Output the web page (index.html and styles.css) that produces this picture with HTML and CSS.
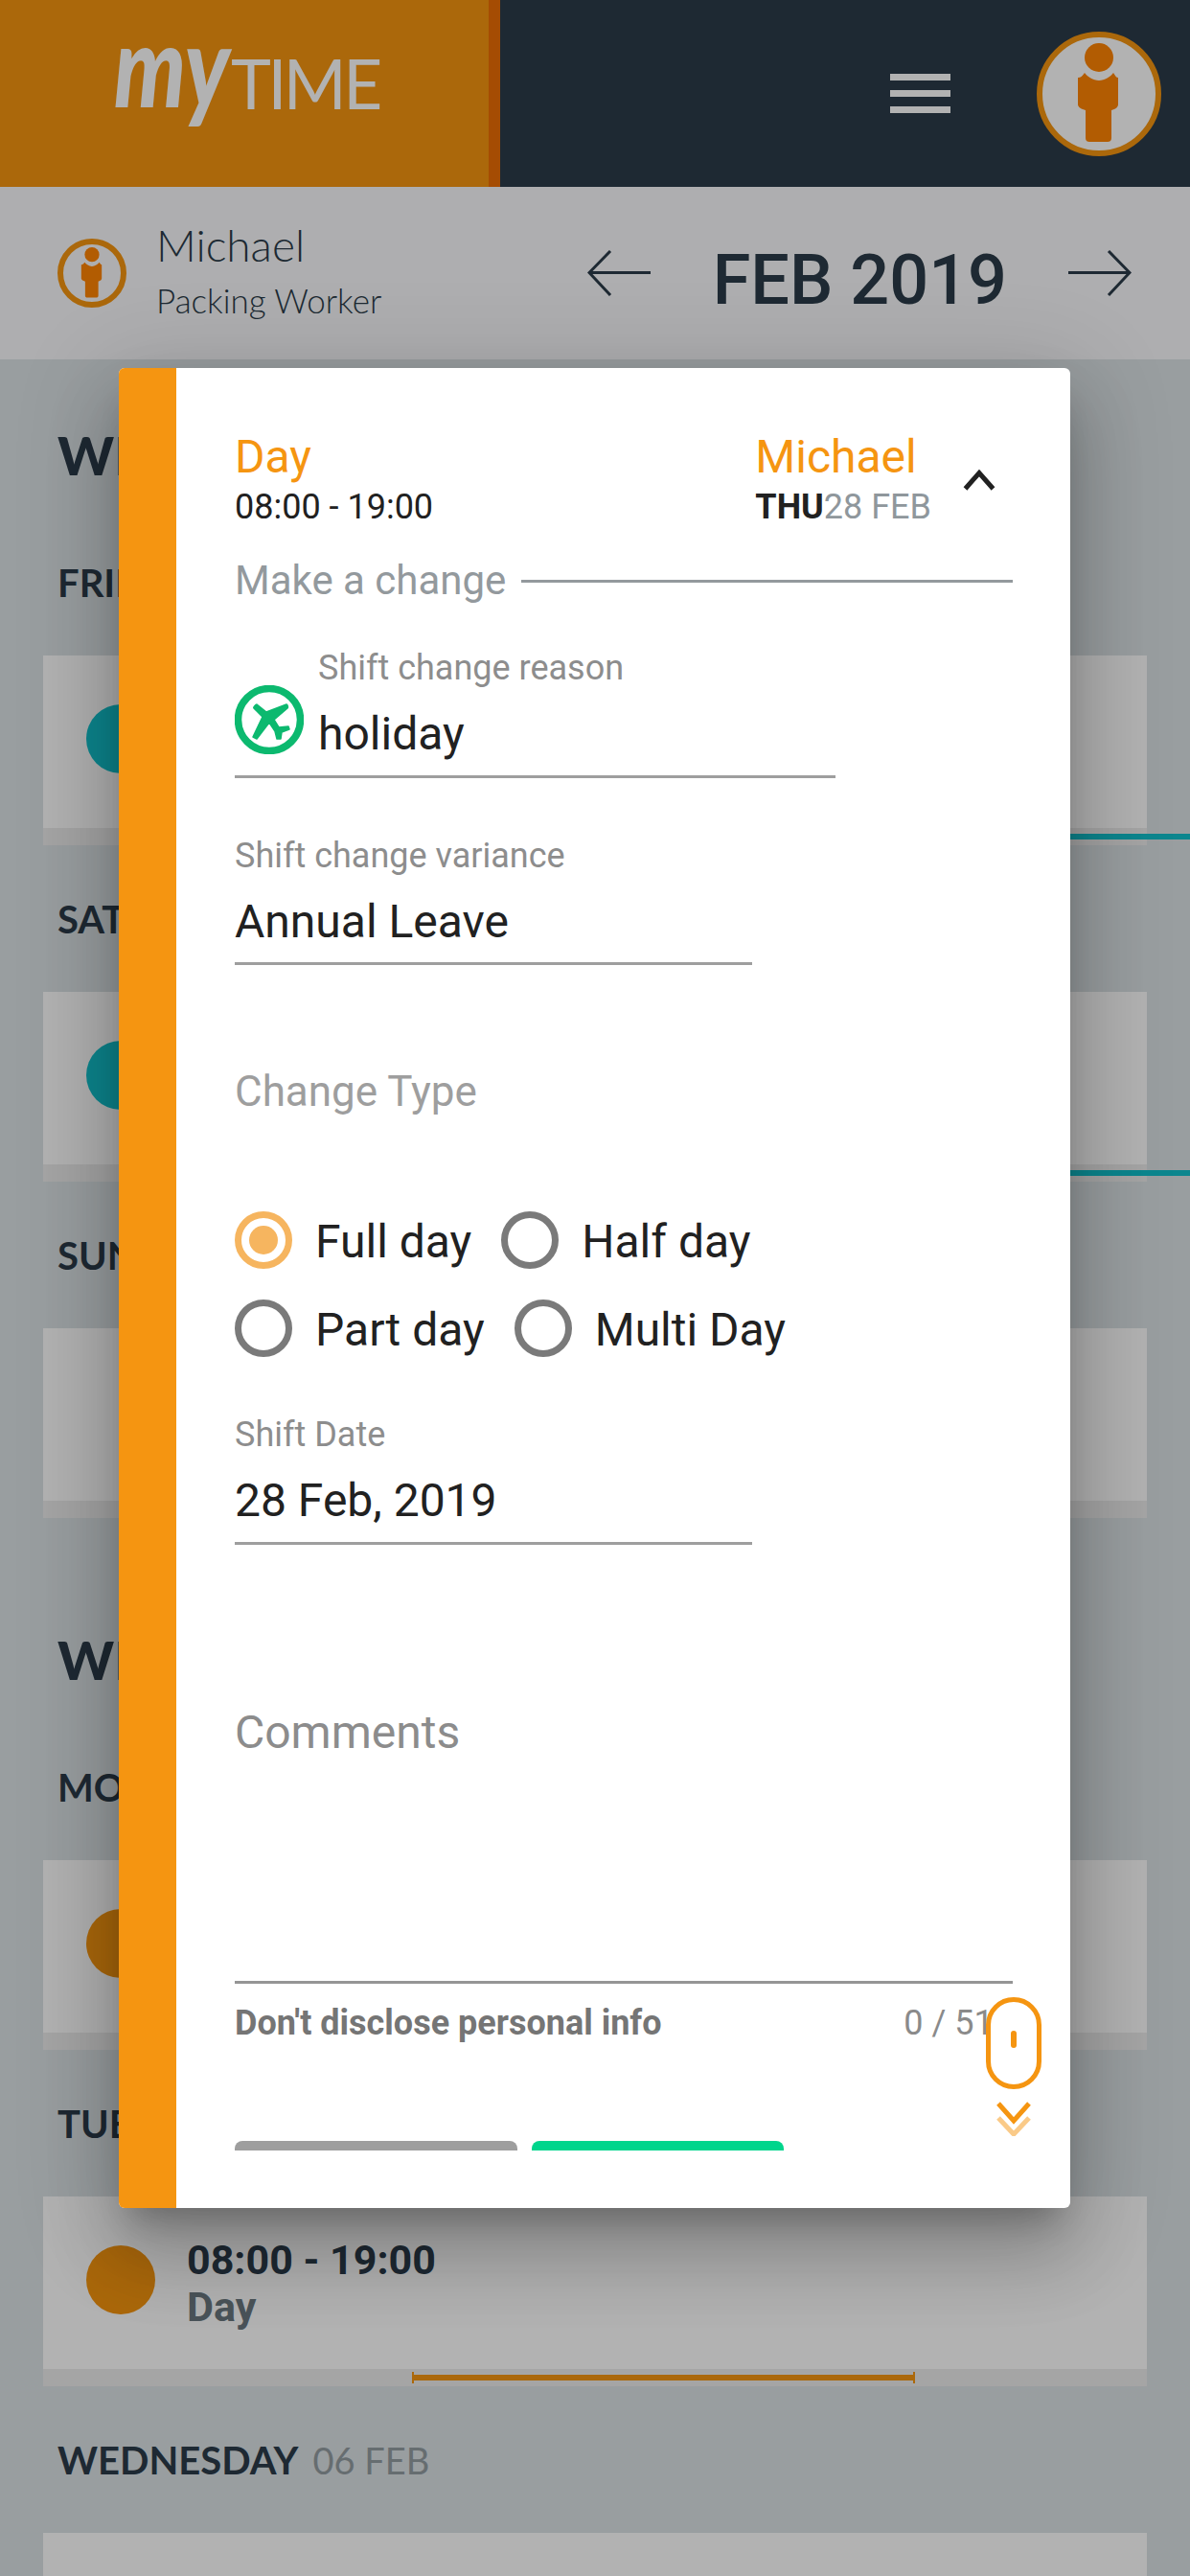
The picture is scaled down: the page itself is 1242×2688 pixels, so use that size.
FILE: index.html
```html
<!DOCTYPE html>
<html lang="en">
<head>
    <meta charset="utf-8">
    <title>myTIME</title>
    <link rel="stylesheet" href="styles.css">
</head>
<body>
    <svg class="sprite" width="0" height="0">
        <symbol id="person" viewBox="0 0 118 118">
            <circle cx="59" cy="21" r="15"/>
            <path d="M37 42c3 0 5-2 7-5 3 4 9 8 15 8s12-4 15-8c2 3 3 5 5 5v28c0 3-3 5-7 6v29c0 3-2 4-4 4H49c-2 0-4-1-4-4V76c-4-1-8-3-8-6z"/>
        </symbol>
    </svg>

    <header class="top-bar">
        <div class="brand">
            <span class="brand-my">my</span><span class="brand-time">TIME</span>
        </div>
        <div class="top-actions">
            <div class="burger"><span></span><span></span><span></span></div>
            <div class="avatar avatar-lg"><svg><use href="#person"/></svg></div>
        </div>
    </header>

    <section class="sub-bar">
        <div class="avatar avatar-sm"><svg><use href="#person"/></svg></div>
        <div class="who">
            <div class="who-name">Michael</div>
            <div class="who-role">Packing Worker</div>
        </div>
        <div class="month-nav">
            <svg class="arrow" viewBox="0 0 66 48"><path d="M66 23.500H2M24 1L2 23.500 24 47"/></svg>
            <div class="month-label">FEB 2019</div>
            <svg class="arrow" viewBox="0 0 66 48"><path d="M0 23.500h64M42 1l22 22.500L42 47"/></svg>
        </div>
    </section>

    <main class="roster">
        <h2 class="week-title">WEEK 5</h2>
        <h3 class="day-title">FRIDAY <span>01 FEB</span></h3>
        <div class="shift-card">
            <div class="shift-main"><span class="dot dot-teal"></span></div>
            <div class="shift-strip"><span class="bar bar-teal"></span></div>
        </div>
        <h3 class="day-title">SATURDAY <span>02 FEB</span></h3>
        <div class="shift-card">
            <div class="shift-main"><span class="dot dot-teal"></span></div>
            <div class="shift-strip"><span class="bar bar-teal"></span></div>
        </div>
        <h3 class="day-title">SUNDAY <span>03 FEB</span></h3>
        <div class="shift-card">
            <div class="shift-main"></div>
            <div class="shift-strip"></div>
        </div>

        <h2 class="week-title week-next">WEEK 6</h2>
        <h3 class="day-title">MONDAY <span>04 FEB</span></h3>
        <div class="shift-card">
            <div class="shift-main"><span class="dot dot-orange"></span></div>
            <div class="shift-strip"></div>
        </div>
        <h3 class="day-title">TUESDAY <span>05 FEB</span></h3>
        <div class="shift-card">
            <div class="shift-main">
                <span class="dot dot-orange"></span>
                <div class="shift-text">
                    <div class="shift-time">08:00 - 19:00</div>
                    <div class="shift-name">Day</div>
                </div>
            </div>
            <div class="shift-strip"><span class="bar bar-orange"></span></div>
        </div>
        <h3 class="day-title">WEDNESDAY <span>06 FEB</span></h3>
        <div class="shift-card">
            <div class="shift-main shift-cut"></div>
        </div>
    </main>

    <div class="scrim"></div>

    <div class="modal">
        <div class="modal-edge"></div>
        <div class="modal-body">
            <div class="modal-scroll">
                <div class="modal-head">
                    <div>
                        <div class="head-title">Day</div>
                        <div class="head-sub">08:00 - 19:00</div>
                    </div>
                    <div class="head-right">
                        <div>
                            <div class="head-title">Michael</div>
                            <div class="head-sub"><b>THU</b><span>28 FEB</span></div>
                        </div>
                        <svg class="chevron-up" viewBox="0 0 34 22"><path d="M2.500 20L17 3.500 31.500 20"/></svg>
                    </div>
                </div>

                <div class="section-line">
                    <span>Make a change</span>
                    <i></i>
                </div>

                <div class="field field-reason">
                    <svg class="reason-icon" viewBox="9 9 72 72">
                        <circle class="reason-ring" cx="45" cy="45" r="32.500"/>
                        <path class="reason-plane" d="M32 29l10 8 21-8c1 0 2 3 1 4L50 45l5 8 10-1 1 3-8 3-1 7h-4l-2-8-6-9-13 17-4-2 10-21-9-9c-1-1 2-4 3-4z"/>
                    </svg>
                    <div>
                        <div class="field-label">Shift change reason</div>
                        <div class="field-value">holiday</div>
                    </div>
                </div>

                <div class="field field-variance">
                    <div class="field-label">Shift change variance</div>
                    <div class="field-value">Annual Leave</div>
                </div>

                <div class="group-title">Change Type</div>
                <div class="radio-group">
                    <div class="radio radio-on"><i></i>Full day</div>
                    <div class="radio"><i></i>Half day</div>
                    <div class="radio"><i></i>Part day</div>
                    <div class="radio"><i></i>Multi Day</div>
                </div>

                <div class="field field-date">
                    <div class="field-label">Shift Date</div>
                    <div class="field-value">28 Feb, 2019</div>
                </div>

                <div class="comments">Comments</div>
                <div class="comments-help">
                    <b>Don't disclose personal info</b>
                    <span>0 / 512</span>
                </div>

                <div class="modal-buttons">
                    <span class="btn btn-grey"></span>
                    <span class="btn btn-green"></span>
                </div>
            </div>
        </div>

        <div class="scroll-hint">
            <div class="mouse"><i></i></div>
            <svg class="hint-arrows" viewBox="0 0 36 36">
                <path class="hint-fade" d="M2 17l16 17 16-17"/>
                <path d="M2 2l16 18L34 2"/>
            </svg>
        </div>
    </div>
</body>
</html>
```

FILE: styles.css
```css
* {
    box-sizing: border-box;
}

html, body {
    margin: 0;
    height: 2688px;
    overflow: hidden;
}

body {
    position: relative;
    background: #dce2e6;
    color: #2c3c49;
    font-family: "Lato", sans-serif;
}

.sprite {
    position: absolute;
}

/* top bar */
.top-bar {
    display: flex;
    height: 195px;
    background: #2c3c49;
}

.brand {
    display: flex;
    align-items: flex-start;
    width: 522px;
    padding: 35px 0 0 119px;
    background: #f59511;
    border-right: 12px solid #ec6d05;
    color: #fff;
    line-height: 100px;
}

.brand-my {
    width: 122px;
    margin-top: -18px;
    font-size: 118px;
    font-weight: 900;
    font-style: italic;
    transform: scaleX(0.8);
    transform-origin: left center;
}

.brand-time {
    font-size: 71px;
    font-weight: 400;
    letter-spacing: -3.500px;
    margin-top: 2px;
}

.top-actions {
    display: flex;
    align-items: center;
    justify-content: flex-end;
    flex: 1;
    gap: 90px;
    padding-right: 30px;
}

.burger {
    display: flex;
    flex-direction: column;
    gap: 10px;
    width: 63px;
}

.burger span {
    height: 7px;
    background: #fff;
}

.avatar {
    border-radius: 50%;
    border-style: solid;
    border-color: #f59511;
    fill: #ff8403;
}

.avatar svg {
    display: block;
    width: 100%;
    height: 100%;
}

.avatar-lg {
    width: 130px;
    height: 130px;
    border-width: 6px;
    background: #fff;
}

.avatar-sm {
    width: 72px;
    height: 72px;
    border-width: 6px;
}

/* employee + month */
.sub-bar {
    display: flex;
    align-items: center;
    height: 180px;
    padding: 0 61px 0 60px;
    background: #f9fafc;
}

.who {
    margin-left: 31px;
    padding-bottom: 6px;
    font-weight: 300;
}

.who-name {
    font-size: 46px;
    line-height: 58px;
}

.who-role {
    font-size: 35px;
    line-height: 48px;
    margin-top: 4px;
}

.month-nav {
    display: flex;
    align-items: center;
    gap: 65px;
    margin-left: auto;
}

.arrow {
    width: 66px;
    height: 48px;
    fill: none;
    stroke: #2c3c49;
    stroke-width: 3;
}

.month-label {
    font-family: "Roboto", sans-serif;
    font-size: 72px;
    font-weight: 500;
    line-height: 80px;
    margin-top: 16px;
    margin-right: -1px;
}

/* roster behind the dialog */
.roster {
    padding: 0 45px;
}

.week-title {
    margin: 67px 15px 0;
    font-size: 56px;
    font-weight: 900;
    line-height: 66px;
    white-space: nowrap;
}

.week-next {
    margin-top: 115px;
}

.day-title {
    margin: 55px 15px 0;
    font-size: 40px;
    font-weight: 700;
    line-height: 44px;
    white-space: nowrap;
}

.week-title + .day-title {
    margin-top: 78px;
}

.day-title span {
    margin-left: 7px;
    font-size: 38px;
    font-weight: 400;
    color: #939ca1;
}

.shift-card {
    margin-top: 54px;
}

.shift-main {
    display: flex;
    align-items: center;
    gap: 33px;
    height: 180px;
    padding: 0 0 6px 45px;
    background: #fff;
}

.shift-cut {
    height: 45px;
}

.shift-strip {
    position: relative;
    height: 18px;
    background: #ececec;
}

.dot {
    flex: none;
    width: 72px;
    height: 72px;
    border-radius: 50%;
}

.dot-teal {
    background: #12c1cc;
}

.dot-orange {
    background: #f59511;
}

.bar {
    position: absolute;
    top: 6px;
    height: 6px;
}

.bar-teal {
    left: 385px;
    right: -45px;
    background: #12c1cc;
}

.bar-orange {
    left: 385px;
    width: 525px;
    background: #f59511;
}

.bar-orange::before,
.bar-orange::after {
    content: "";
    position: absolute;
    top: -3px;
    width: 2px;
    height: 12px;
    background: #f59511;
}

.bar-orange::before {
    left: 0;
}

.bar-orange::after {
    right: 0;
}

.shift-text {
    margin-top: 8px;
    font-family: "Roboto", sans-serif;
    font-weight: 700;
}

.shift-time {
    font-size: 43px;
    line-height: 48px;
}

.shift-name {
    font-size: 43px;
    line-height: 50px;
    color: #6a7780;
}

.scrim {
    position: absolute;
    inset: 0;
    background: rgba(0, 0, 0, 0.3);
}

/* dialog */
.modal {
    position: absolute;
    top: 384px;
    left: 124px;
    display: flex;
    width: 993px;
    height: 1920px;
    border-radius: 6px;
    background: #fff;
    box-shadow: 0 48px 72px 6px rgba(0, 0, 0, 0.16), 0 18px 100px 16px rgba(0, 0, 0, 0.14), 0 24px 30px -14px rgba(0, 0, 0, 0.22);
    font-family: "Roboto", sans-serif;
    color: #212121;
}

.modal-edge {
    flex: none;
    width: 60px;
    border-radius: 6px 0 0 6px;
    background: #f59511;
}

.modal-body {
    flex: 1;
    padding: 0 60px 0 61px;
}

.modal-scroll {
    height: 1860px;
    padding-top: 68px;
    overflow: hidden;
}

.modal-head {
    display: flex;
    align-items: center;
    justify-content: space-between;
    padding-right: 18px;
}

.head-right {
    display: flex;
    align-items: center;
    gap: 33px;
}

.head-title {
    font-size: 48px;
    line-height: 50px;
    color: #f59511;
}

.head-sub {
    margin-top: 7px;
    font-size: 36px;
    line-height: 40px;
}

.head-sub span {
    color: #8f979c;
}

.chevron-up {
    width: 34px;
    height: 22px;
    fill: none;
    stroke: #212121;
    stroke-width: 5;
}

.section-line {
    display: flex;
    align-items: center;
    gap: 16px;
    margin-top: 34px;
    font-size: 42px;
    line-height: 46px;
    color: #93999d;
}

.section-line i {
    flex: 1;
    height: 3px;
    background: #93999d;
}

.field {
    border-bottom: 3px solid #9e9e9e;
}

.field-label {
    font-size: 36px;
    line-height: 40px;
    color: #8d8d8d;
}

.field-value {
    font-size: 48px;
    line-height: 56px;
}

.field-reason {
    display: flex;
    align-items: flex-end;
    gap: 15px;
    width: 627px;
    margin-top: 48px;
    padding-bottom: 15px;
}

.field-reason .field-value {
    margin-top: 21px;
}

.reason-icon {
    flex: none;
    width: 72px;
    height: 72px;
    margin-bottom: 7px;
}

.reason-ring {
    fill: none;
    stroke: #0cb96f;
    stroke-width: 7.500;
}

.reason-plane {
    fill: #0cb96f;
    stroke: #0cb96f;
    stroke-width: 1.500;
    stroke-linejoin: round;
}

.field-variance {
    width: 540px;
    margin-top: 61px;
    padding-bottom: 14px;
}

.field-variance .field-value {
    margin-top: 21px;
}

.group-title {
    margin-top: 109px;
    font-size: 44px;
    line-height: 46px;
    color: #9e9e9e;
}

.radio-group {
    display: flex;
    flex-wrap: wrap;
    gap: 32px 31px;
    width: 640px;
    margin-top: 102px;
}

.radio {
    display: flex;
    align-items: center;
    gap: 24px;
    height: 60px;
    padding-top: 2px;
    font-size: 48px;
}

.radio i {
    display: flex;
    align-items: center;
    justify-content: center;
    width: 60px;
    height: 60px;
    margin-top: -2px;
    border: 7px solid #7a7a7a;
    border-radius: 50%;
}

.radio-on i {
    border-color: #f6b55f;
}

.radio-on i::after {
    content: "";
    width: 30px;
    height: 30px;
    border-radius: 50%;
    background: #f6b55f;
}

.field-date {
    width: 540px;
    margin-top: 61px;
    padding-bottom: 15px;
}

.field-date .field-value {
    margin-top: 21px;
}

.comments {
    height: 290px;
    margin-top: 168px;
    border-bottom: 3px solid #959595;
    font-size: 48px;
    line-height: 56px;
    color: #8c8c8c;
}

.comments-help {
    display: flex;
    justify-content: space-between;
    margin-top: 21px;
    font-size: 36px;
    line-height: 40px;
    color: #8a8a8a;
}

.comments-help b {
    color: #757575;
}

.modal-buttons {
    display: flex;
    gap: 15px;
    margin-top: 103px;
}

.btn {
    height: 60px;
    border-radius: 8px;
}

.btn-grey {
    width: 295px;
    background: #9e9e9e;
}

.btn-green {
    width: 263px;
    background: #00d58c;
}

.scroll-hint {
    position: absolute;
    right: 30px;
    top: 1700px;
    display: flex;
    flex-direction: column;
    align-items: center;
    gap: 13px;
}

.mouse {
    display: flex;
    justify-content: center;
    width: 58px;
    height: 96px;
    padding-top: 30px;
    border: 5px solid #f59511;
    border-radius: 29px;
    background: #fff;
}

.mouse i {
    width: 6px;
    height: 18px;
    border-radius: 3px;
    background: #f59511;
}

.hint-arrows {
    width: 36px;
    height: 36px;
    fill: none;
    stroke: #f59511;
    stroke-width: 5;
}

.hint-fade {
    opacity: 0.5;
}
```
